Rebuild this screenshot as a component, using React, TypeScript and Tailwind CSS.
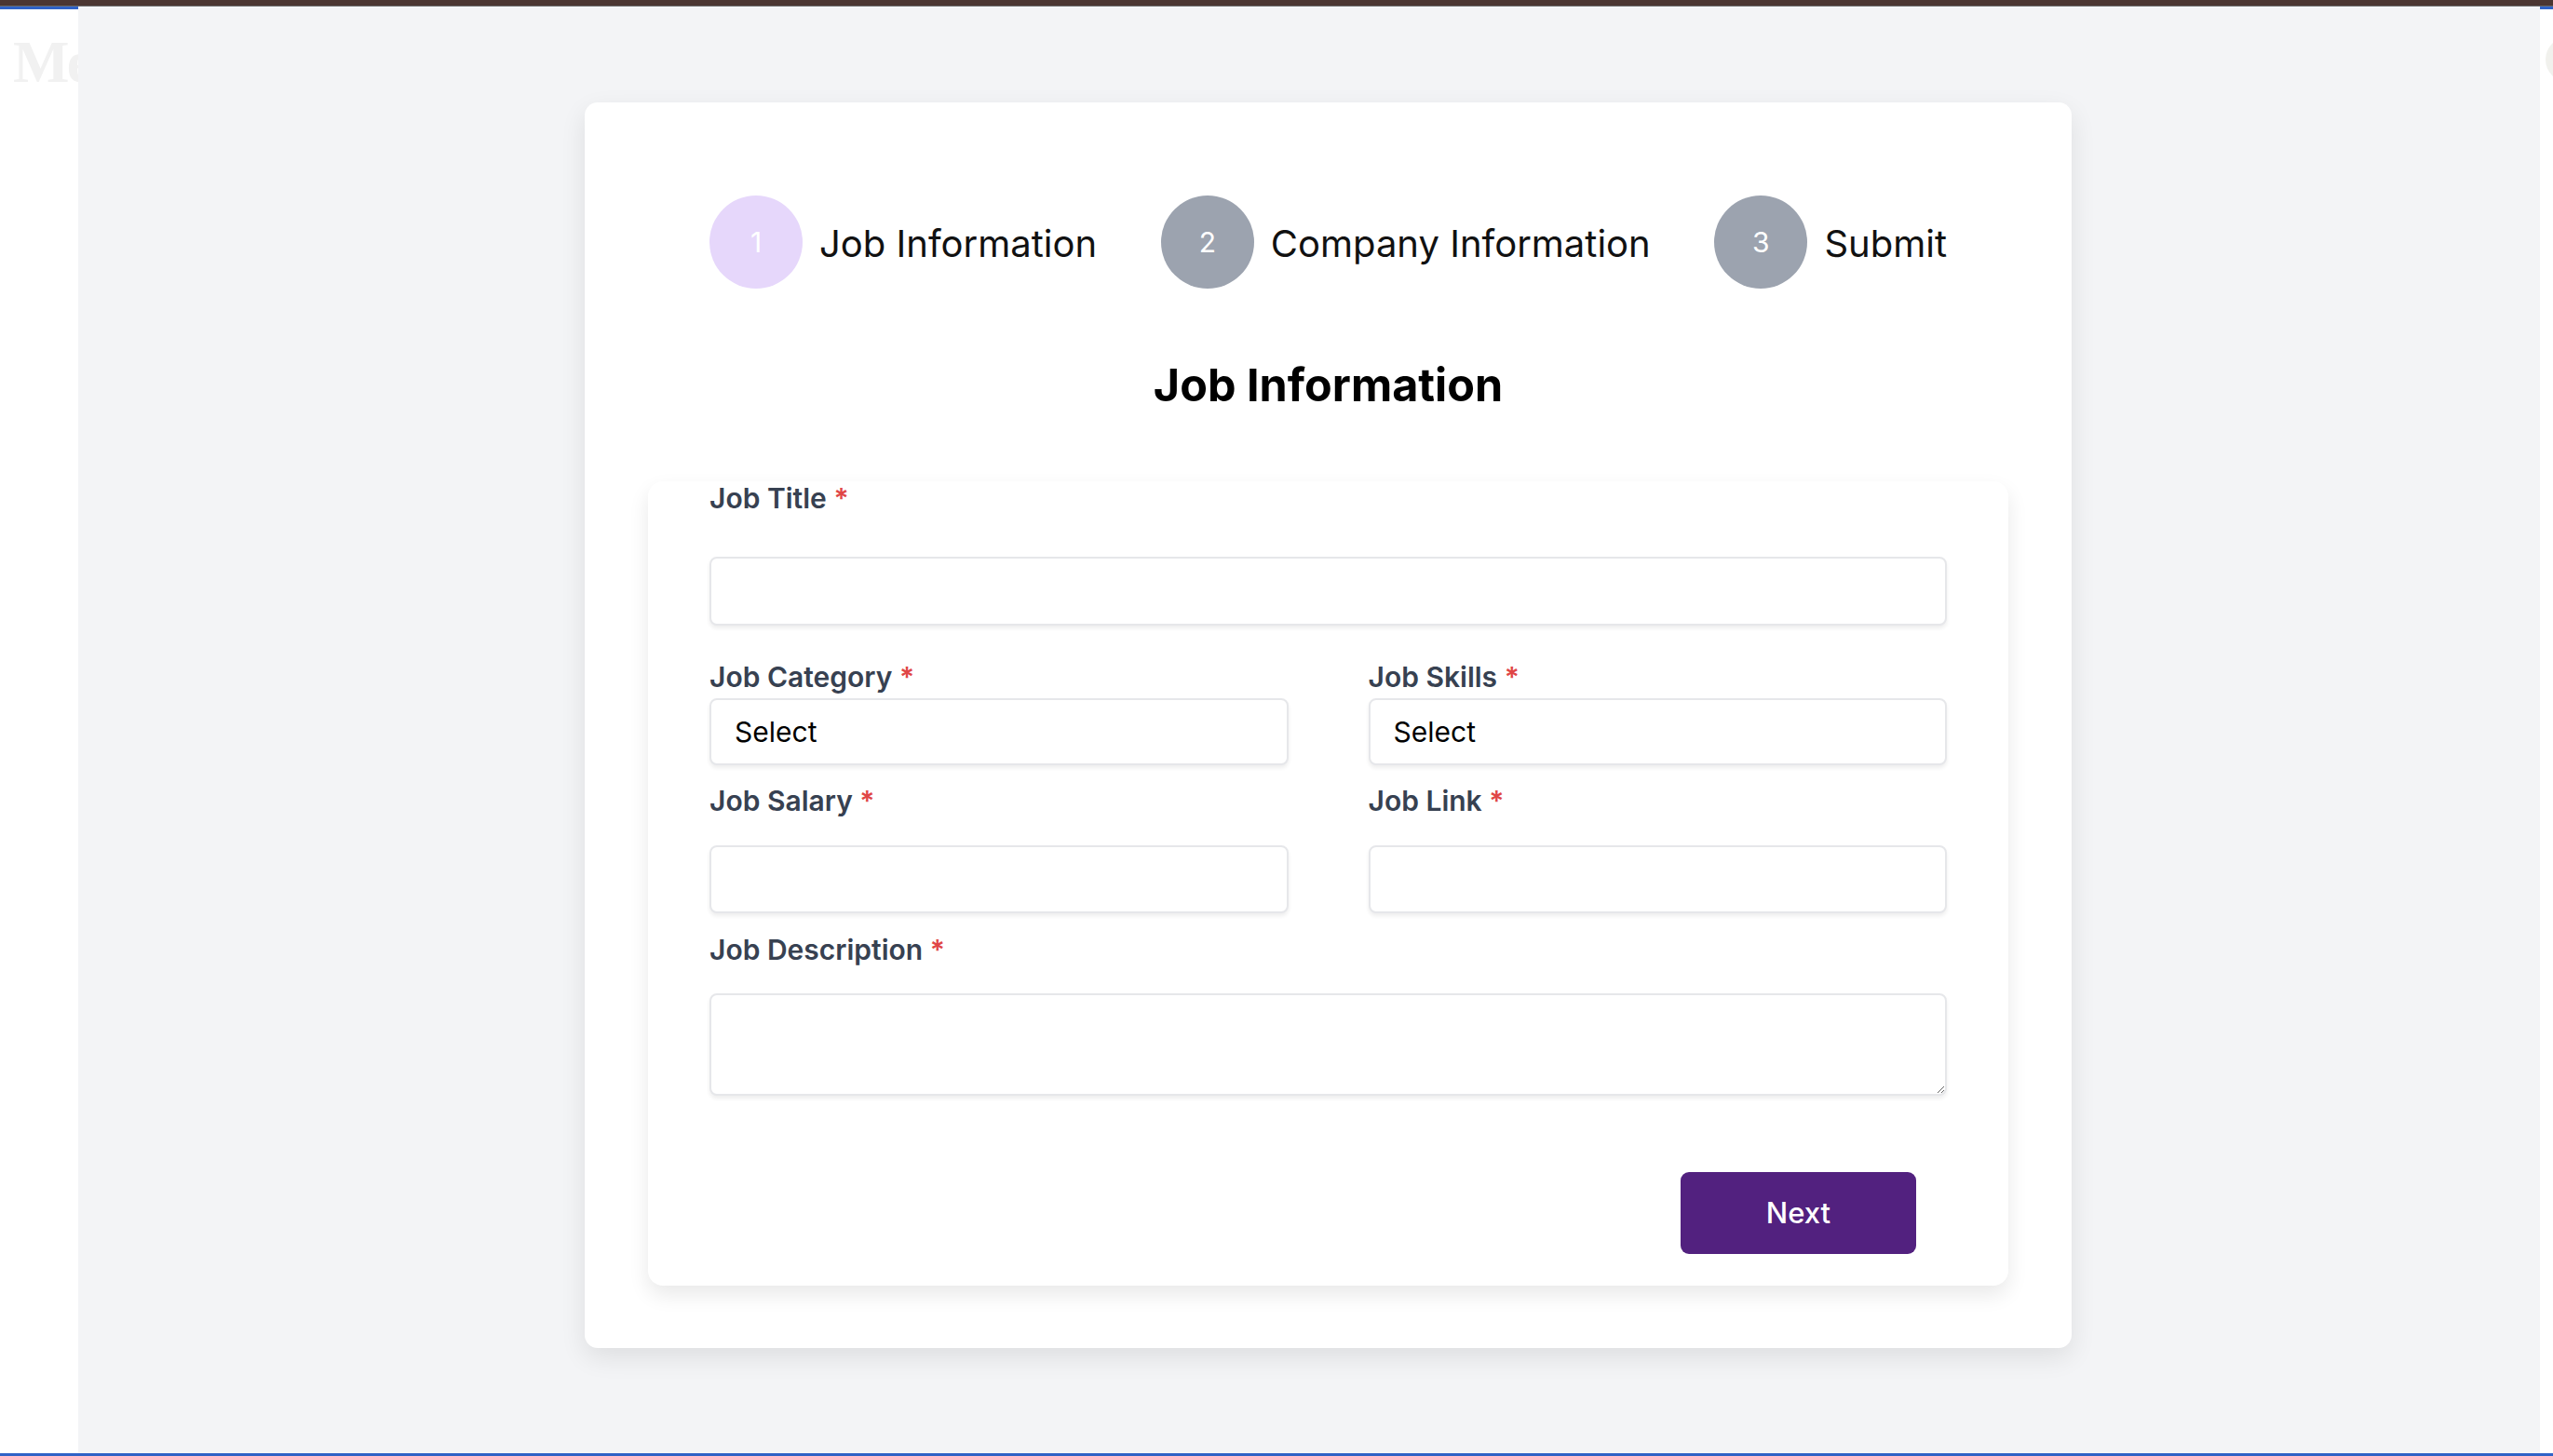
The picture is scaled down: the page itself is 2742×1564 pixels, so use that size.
import React from 'react';

const font = { fontFamily: 'Inter, "Noto Sans", sans-serif' };

function Step({ num, label, active }: { num: number; label: string; active?: boolean }) {
  return (
    <div className="flex items-center gap-[18px]">
      <div
        className={`flex h-[100px] w-[100px] items-center justify-center rounded-full text-[30px] text-white ${active ? 'bg-[#e6d7fb]' : 'bg-[#9ca3af]'}`}
      >
        {num}
      </div>
      <span className="mt-[4px] text-[40px] leading-[50px] text-[#111111]">{label}</span>
    </div>
  );
}

function Label({ text, className = '' }: { text: string; className?: string }) {
  return (
    <label className={`block text-[30px] leading-[36px] font-semibold text-[#374151] ${className}`}>
      {text} <span className="text-[#e04646]">*</span>
    </label>
  );
}

const field =
  'block w-full rounded-[8px] border-2 border-[#e6e7ea] bg-white shadow-[0_3px_4px_rgba(0,0,0,0.07)] outline-none';

function SelectBox() {
  return (
    <div className={`${field} flex h-[72px] items-center px-[25px] text-[30px] text-black`}>Select</div>
  );
}

export default function App() {
  return (
    <div className="flex h-screen w-full flex-col bg-white" style={font}>
      <div className="h-[7px] shrink-0 bg-[#4b3632] border-b border-[#6b6b6b]" />
      <div className="flex min-h-0 flex-1">
        {/* left strip */}
        <aside className="w-[84px] shrink-0 overflow-hidden border-t-[3px] border-[#2f62c6] bg-white">
          <div
            className="mt-[22px] ml-[14px] whitespace-nowrap text-[64px] font-bold leading-[70px] tracking-[-0.04em] text-[#f1f1f1]"
            style={{ fontFamily: '"Liberation Serif", serif' }}
          >
            Me
          </div>
        </aside>

        <main className="flex min-w-0 flex-1 bg-[#f3f4f6] pt-[103px] pl-[544px]">
          <div className="h-fit w-[1597px] rounded-[14px] bg-white px-[68px] pt-[100px] pb-[67px] shadow-[0_10px_28px_rgba(0,0,0,0.09)]">
            <div className="flex items-center justify-between px-[66px]">
              <Step num={1} label="Job Information" active />
              <Step num={2} label="Company Information" />
              <Step num={3} label="Submit" />
            </div>

            <h1 className="mt-[74px] text-center text-[48.5px] font-bold leading-[60px] text-black">Job Information</h1>

            <form className="mt-[74px] rounded-[16px] bg-white px-[66px] pb-[34px] shadow-[0_10px_22px_rgba(0,0,0,0.09)]">
              <Label text="Job Title" className="-mt-[1px]" />
              <input type="text" className={`${field} mt-[45px] h-[74px] px-[25px] text-[30px]`} />

              <div className="mt-[37px] grid grid-cols-2 gap-x-[86px]">
                <div>
                  <Label text="Job Category" />
                  <div className="mt-[5px]">
                    <SelectBox />
                  </div>
                </div>
                <div>
                  <Label text="Job Skills" />
                  <div className="mt-[5px]">
                    <SelectBox />
                  </div>
                </div>
                <div className="mt-[20px]">
                  <Label text="Job Salary" />
                  <input type="text" className={`${field} mt-[30px] h-[73px] px-[25px] text-[30px]`} />
                </div>
                <div className="mt-[20px]">
                  <Label text="Job Link" />
                  <input type="text" className={`${field} mt-[30px] h-[73px] px-[25px] text-[30px]`} />
                </div>
              </div>

              <Label text="Job Description" className="mt-[21px]" />
              <textarea className={`${field} mt-[29px] h-[110px] px-[25px] py-[12px] text-[30px]`} />

              <div className="mt-[82px] flex justify-end pr-[33px]">
                <button
                  type="button"
                  className="h-[88px] w-[253px] rounded-[9px] bg-[#52217f] text-[31px] font-medium text-white"
                >
                  Next
                </button>
              </div>
            </form>
          </div>
        </main>

        {/* right strip */}
        <aside className="w-[14px] shrink-0 overflow-hidden border-t-[3px] border-[#2f62c6] bg-white">
          <div className="mt-[30px] ml-[6px] h-[48px] w-[48px] rounded-full bg-[#f1f1ed]" />
        </aside>
      </div>
      <div className="h-[3px] shrink-0 bg-[#2f62c6]" />
    </div>
  );
}
